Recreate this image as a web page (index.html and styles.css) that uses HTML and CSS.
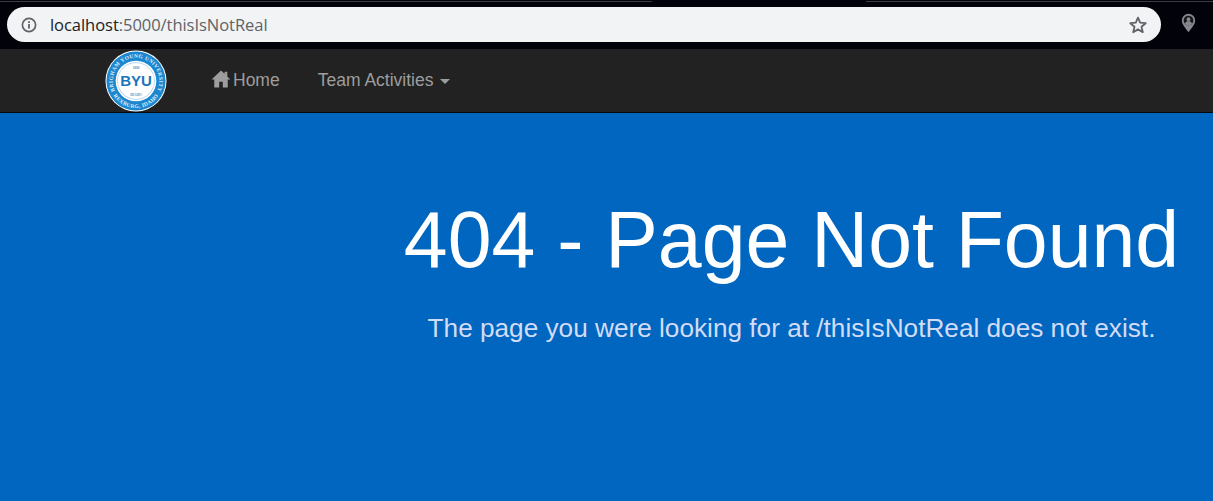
FILE: index.html
```html
<!DOCTYPE html>
<html lang="en">
<head>
<meta charset="utf-8">
<title>404 - Page Not Found</title>
<link rel="stylesheet" href="styles.css">
</head>
<body>
<div class="chrome">
  <div class="tabline"><span class="tabline-a"></span><span class="tabline-gap"></span><span class="tabline-b"></span></div>
  <div class="toolbar">
    <div class="omnibox">
      <svg class="info" viewBox="0 0 16 16" width="16" height="16"><circle cx="8" cy="8" r="6.6" fill="none" stroke="#5f6368" stroke-width="1.7"/><rect x="7.1" y="7" width="1.8" height="4.6" fill="#5f6368"/><rect x="7.1" y="4.2" width="1.8" height="1.8" fill="#5f6368"/></svg>
      <div class="url"><span class="host">localhost</span>:5000/thisIsNotReal</div>
      <svg class="star" viewBox="0 0 20 20" width="20" height="20"><path d="M10 2.6l2.2 5.1 5.5.5-4.2 3.6 1.3 5.4L10 14.4l-4.8 2.8 1.3-5.4-4.2-3.6 5.5-.5z" fill="none" stroke="#5f6368" stroke-width="1.8" stroke-linejoin="round"/></svg>
    </div>
    <svg class="pin" viewBox="0 0 18 24" width="15" height="20"><path d="M9 1a8 8 0 0 1 8 8c0 4.500-4.500 9.500-8 14C5.500 18.500 1 13.500 1 9a8 8 0 0 1 8-8z" fill="#85888c"/><circle cx="9" cy="9" r="5.800" fill="#15161a"/><circle cx="9" cy="7.500" r="2.300" fill="#85888c"/><path d="M4.800 13c.6-2.500 2.200-3.200 4.200-3.200s3.600.7 4.200 3.200a5.800 5.800 0 0 1-8.400 0z" fill="#85888c"/></svg>
  </div>
</div>
<nav class="navbar">
  <svg class="logo" viewBox="0 0 64 64" width="62" height="62">
    <defs>
      <path id="arc-top" d="M13.600 47.400A24 24 0 1 1 50.400 47.400"/>
      <path id="arc-bottom" d="M5.400 39.300A27.500 27.500 0 0 0 58.600 39.300"/>
    </defs>
    <circle cx="32" cy="32" r="31.500" fill="#fff"/>
    <circle cx="32" cy="32" r="30.500" fill="#1c86cf"/>
    <circle cx="32" cy="32" r="21" fill="#fff"/>
    <circle cx="32" cy="32" r="19" fill="#fff" stroke="#9ccbe9" stroke-width=".8"/>
    <text class="seal-ring"><textPath href="#arc-top" startOffset="50%" text-anchor="middle">BRIGHAM YOUNG UNIVERSITY</textPath></text>
    <text class="seal-ring"><textPath href="#arc-bottom" startOffset="50%" text-anchor="middle">REXBURG, IDAHO</textPath></text>
    <text class="seal-small" x="32" y="20" text-anchor="middle">1888</text>
    <rect x="14" y="25" width="36" height="13.500" fill="#fff"/>
    <text class="seal-byu" x="32" y="37" text-anchor="middle">BYU</text>
    <text class="seal-small" x="32" y="47" text-anchor="middle">IDAHO</text>
  </svg>
  <ul class="nav-links">
    <li class="nav-item">
      <svg class="home" viewBox="0 0 22 20" width="20" height="18"><path d="M11 .5L.5 10.500H3.500V19.500H9V13h4v6.500h5.500V10.500h3L18 7.200V2h-3v2.300z" fill="#9d9d9d"/></svg><span>Home</span>
    </li>
    <li class="nav-item">Team Activities <span class="caret"></span></li>
  </ul>
</nav>
<main class="page">
  <div class="jumbo">
    <h1 class="title">404 - Page Not Found</h1>
    <p class="lead">The page you were looking for at /thisIsNotReal does not exist.</p>
  </div>
</main>
</body>
</html>
```
FILE: styles.css
```css
* { box-sizing: border-box; }
html, body { margin: 0; height: 100%; }
body {
  display: flex;
  flex-direction: column;
  height: 501px;
  overflow: hidden;
  font-family: "Liberation Sans", Arial, sans-serif;
  background: #0066bf;
}
.chrome { background: #02030a; height: 49px; flex: none; }
.tabline { display: flex; height: 7px; padding-top: 1px; }
.tabline span { height: 1px; }
.tabline-a { width: 652px; background: #3c3d42; }
.tabline-gap { width: 214px; }
.tabline-b { flex: 1; background: #3c3d42; }
.toolbar { display: flex; align-items: center; height: 35px; padding-left: 7px; }
.omnibox {
  display: flex;
  align-items: center;
  width: 1154px;
  height: 35px;
  background: #f1f3f4;
  border-radius: 18px;
  padding: 0 13px 0 14px;
}
.info { flex: none; }
.url {
  flex: 1;
  margin-left: 13px;
  font-family: "Open Sans", "Liberation Sans", sans-serif;
  font-size: 16.55px;
  letter-spacing: -0.06px;
  color: #5f6368;
}
.host { color: #202124; }
.star { flex: none; }
.pin { margin: 0 0 3px 20px; flex: none; }
.navbar {
  flex: none;
  display: flex;
  align-items: center;
  height: 64px;
  padding-left: 105px;
  background: #222;
  border-bottom: 1px solid #080808;
}
.logo { flex: none; }
.nav-links {
  display: flex;
  list-style: none;
  margin: 0 0 0 44px;
  padding: 0;
  gap: 38px;
}
.nav-item {
  display: flex;
  align-items: center;
  font-size: 17.5px;
  color: #9d9d9d;
  white-space: pre;
}
.home { margin-right: 2px; margin-top: -4px; }
.caret {
  width: 0;
  height: 0;
  margin-left: 2px;
  margin-top: 2px;
  border-top: 5px solid #9d9d9d;
  border-left: 5px solid transparent;
  border-right: 5px solid transparent;
}
.seal-ring { font: bold 5.600px "Liberation Serif", serif; fill: #e3f1fb; letter-spacing: .4px; }
.seal-small { font: bold 3.500px "Liberation Serif", serif; fill: #4d93c9; }
.seal-byu { font: bold 15.500px "Liberation Sans", sans-serif; fill: #1b75bc; }
.page {
  flex: 1;
  display: grid;
  grid-template-columns: 370px 1fr;
  color: #fff;
}
.jumbo { grid-column: 2; text-align: center; padding-top: 84px; }
.title { margin: 0; font-size: 78.8px; font-weight: 400; line-height: 1.1; }
.lead { margin: 26px 0 0; font-size: 26.2px; line-height: 1.4; color: #d3dcf6; }
```
